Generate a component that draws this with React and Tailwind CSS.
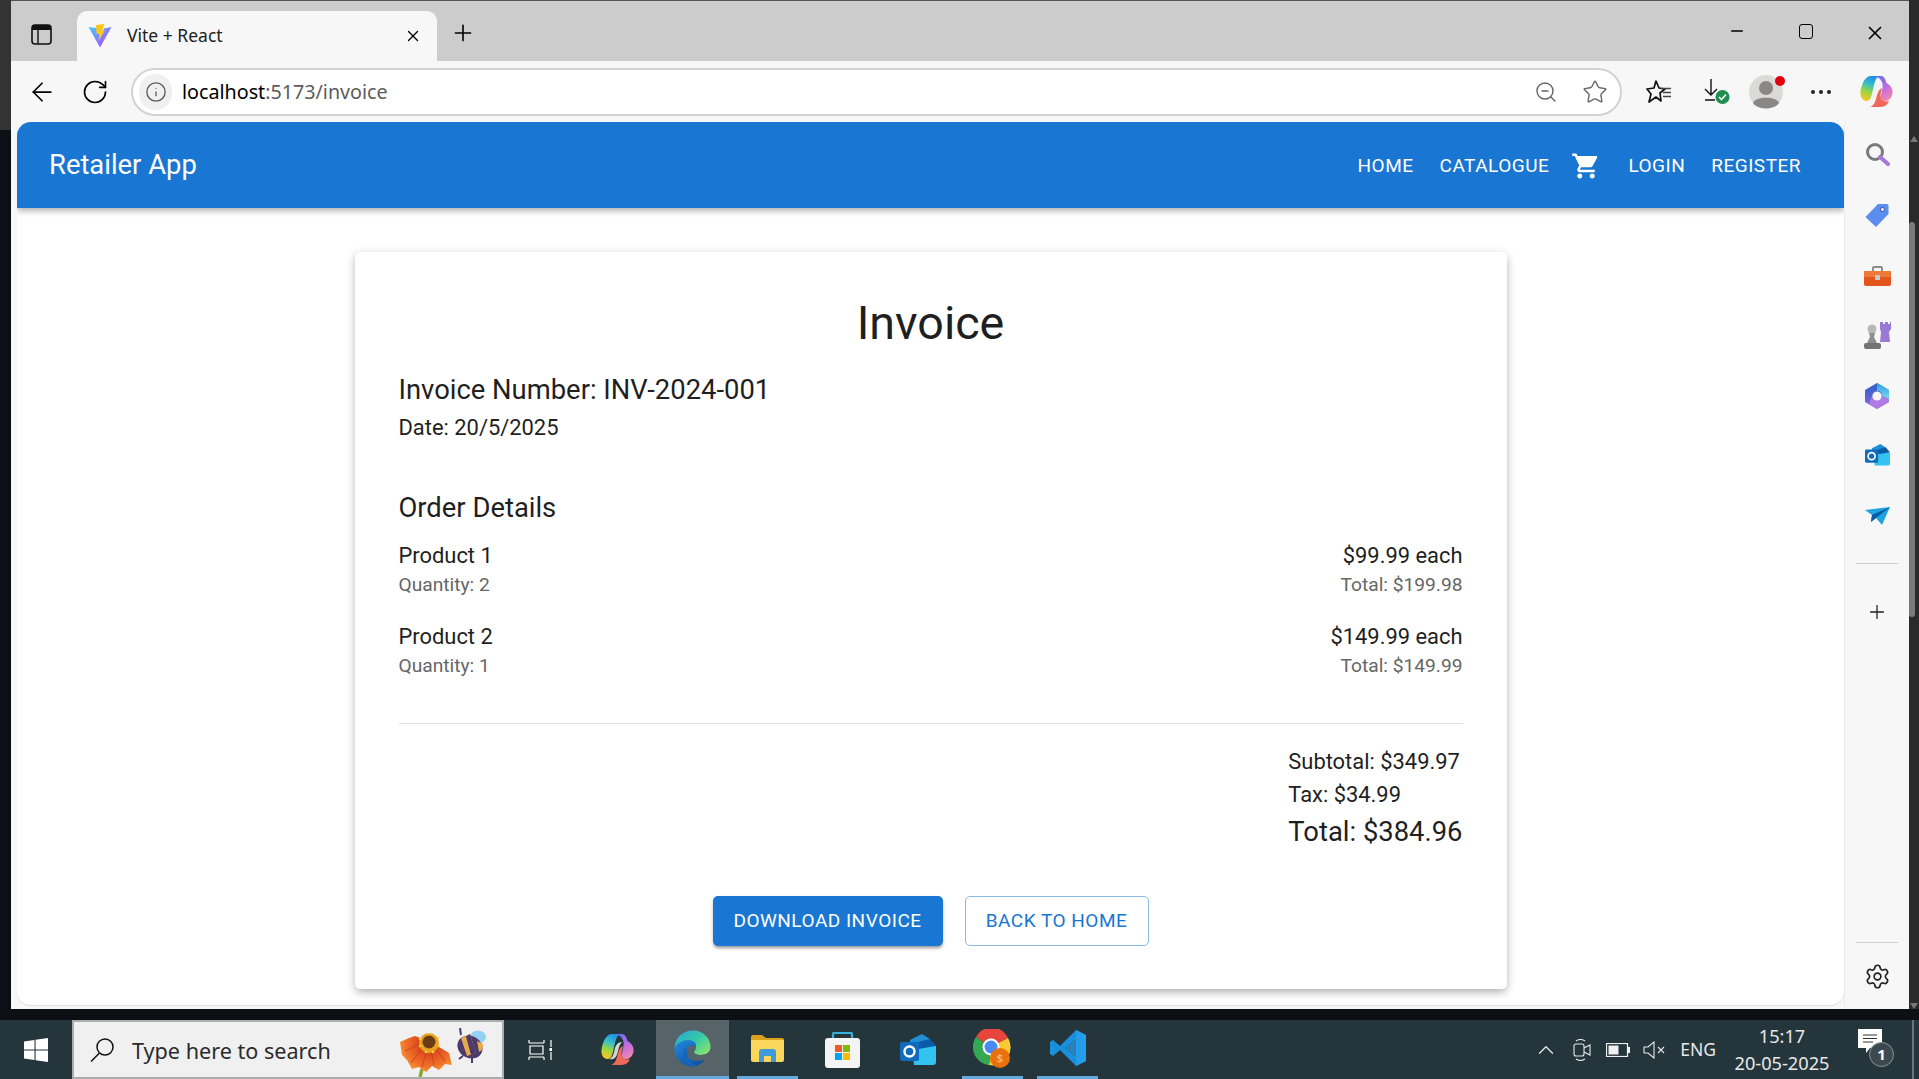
import { ArrowLeft, RotateCw, Info, ZoomOut, Star, X, Plus, Minus, Settings, ChevronUp } from 'lucide-react';

const roboto = "font-['Roboto',sans-serif]";
const segoe = "font-['Noto_Sans',sans-serif]";

function ViteLogo() {
  return (
    <svg viewBox="0 0 24 24" className="h-[24px] w-[24px]">
      <defs>
        <linearGradient id="viteA" x1="0" y1="0" x2="1" y2="1">
          <stop offset="0" stopColor="#41d1ff" />
          <stop offset="1" stopColor="#bd34fe" />
        </linearGradient>
      </defs>
      <path d="M0.5 3 L12 23.5 L23.5 3 L16 4.5 L12 12 L9 4 Z" fill="url(#viteA)" />
      <path d="M8 1 L16.5 0 L14 7 L17 6.5 L10.5 17 L11.5 9.5 L8.5 10 Z" fill="#ffc517" />
    </svg>
  );
}

function CopilotLogo({ id, size = 33 }) {
  return (
    <svg viewBox="0 0 33 33" style={{ width: size, height: size }}>
      <defs>
        <linearGradient id={`${id}A`} x1="0.6" y1="0" x2="0.3" y2="1">
          <stop offset="0" stopColor="#1f8ee8" />
          <stop offset="0.35" stopColor="#35c0c8" />
          <stop offset="0.65" stopColor="#9bd63f" />
          <stop offset="1" stopColor="#fbc52c" />
        </linearGradient>
        <linearGradient id={`${id}B`} x1="0.3" y1="0" x2="0.7" y2="1">
          <stop offset="0" stopColor="#6a6ff0" />
          <stop offset="0.5" stopColor="#c56be2" />
          <stop offset="1" stopColor="#f38aa8" />
        </linearGradient>
      </defs>
      <path d="M11 1 H20 C16 2 15 6 13.5 12 C12 19 11 26 6.5 26 C2.5 26 0 22 0.5 17 C1.5 9 5 1 11 1 Z" fill={`url(#${id}A)`} />
      <path d="M15 1 H21 C24 1 25.5 4 26.5 8 C30 10 33 13 32.5 18 C32 24 27 27 23 26 C20 25 21 19 22.5 13 C23.5 8 21 3 15 1 Z" fill={`url(#${id}B)`} />
      <path d="M10 32 H20 C25 32 28 29 29 26 C26 27 22 27 21 23 C20 20 21 16 22 13 C19 14 18 17 16.5 22 C15.5 26 14 31 10 32 Z" fill="#f0685a" />
      <path d="M8 26 C12 25 13 20 14 15 C15 12 17 9 21 9 C18 12 18 15 16.5 20 C15 25 13 27 8 26 Z" fill="#f4f1ef" opacity="0.85" />
    </svg>
  );
}

function EdgeLogo() {
  return (
    <svg viewBox="0 0 37 37" className="h-[37px] w-[37px]">
      <defs>
        <linearGradient id="edgeA" x1="0" y1="0" x2="1" y2="0.8">
          <stop offset="0" stopColor="#2aa3e0" />
          <stop offset="0.55" stopColor="#35c9a8" />
          <stop offset="1" stopColor="#86e36a" />
        </linearGradient>
        <linearGradient id="edgeB" x1="0" y1="0" x2="0.8" y2="1">
          <stop offset="0" stopColor="#1f8ae0" />
          <stop offset="1" stopColor="#0f4f9e" />
        </linearGradient>
      </defs>
      <path d="M0.5 18 C1 7 9 0.5 19 0.5 C29 0.5 36.5 8 36.5 17 C36.5 22 32 25 27 25 C23 25 20 24 20 22 C20 21 22 20 22 17 C22 13 19 11 15 11 C7 11 0.5 18 0.5 18 Z" fill="url(#edgeA)" />
      <path d="M0.5 18 C3 13 9 10 14 10 C19 10 23 13 22 17 C20 15 15 15 13 19 C11 24 14 29 19 30 C23 31 28 31 31 29 C28 34 23 36.5 18 36.5 C8 36.5 0 28 0.5 18 Z" fill="url(#edgeB)" />
      <path d="M13 19 C15 15 20 15 22 17 C21 20 20 21 20 22 C20 24 23 25 27 25 C30 25 33 24 35 22 C34 25 33 27 31 29 C28 31 23 31 19 30 C14 29 11 24 13 19 Z" fill="#56646a" />
      <path d="M13 20 C13 26 16 34 23 36 C17 37 10 33 9 26 C8.5 23 10 20 13 17 Z" fill="#1567b8" />
    </svg>
  );
}

function ExplorerLogo() {
  return (
    <svg viewBox="0 0 33 27" className="h-[27px] w-[33px]">
      <path d="M0 2 a2 2 0 0 1 2 -2 H11 L15 3 H31 a2 2 0 0 1 2 2 V8 H0 Z" fill="#d9a21b" />
      <path d="M0 5 H33 V25 a2 2 0 0 1 -2 2 H2 a2 2 0 0 1 -2 -2 Z" fill="#fbd75b" />
      <path d="M8 27 V17 a3 3 0 0 1 3 -3 H22 a3 3 0 0 1 3 3 V27 H20 V21 H13 V27 Z" fill="#3f9bd9" />
    </svg>
  );
}

function StoreLogo() {
  return (
    <svg viewBox="0 0 35 36" className="h-[36px] w-[35px]">
      <path d="M8 7 V2 a1 1 0 0 1 1 -1 H26 a1 1 0 0 1 1 1 V7" fill="none" stroke="#35b0d8" strokeWidth="2.2" />
      <rect x="0" y="6" width="35" height="30" rx="3" fill="#f4f4f4" />
      <rect x="10" y="13" width="7" height="7" fill="#f05a28" />
      <rect x="18" y="13" width="7" height="7" fill="#7fba00" />
      <rect x="10" y="21" width="7" height="7" fill="#00a4ef" />
      <rect x="18" y="21" width="7" height="7" fill="#ffb900" />
    </svg>
  );
}

function OutlookLogo({ size = 36 }) {
  return (
    <svg viewBox="0 0 36 32" style={{ width: size, height: size * 0.889 }}>
      <path d="M10 6 L22 0 L30 5 V14 H10 Z" fill="#1f8fd8" />
      <path d="M18 8 L30 5 L36 12 L20 18 Z" fill="#0a5aa8" />
      <path d="M12 16 L36 12 V28 a3 3 0 0 1 -3 3 H14 Z" fill="#33c3f0" />
      <rect x="0" y="8" width="19" height="19" rx="2" fill="#0f6cbd" />
      <circle cx="9.5" cy="17.5" r="5" fill="none" stroke="#fff" strokeWidth="2.4" />
    </svg>
  );
}

function ChromeLogo() {
  return (
    <svg viewBox="0 0 39 39" className="h-[39px] w-[39px]">
      <path d="M18 18 L3 8 A18 18 0 0 1 35 9 Z" fill="#e8453c" />
      <path d="M18 18 L35 9 A18 18 0 0 1 16 36 Z" fill="#fcc934" />
      <path d="M18 18 L16 36 A18 18 0 0 1 3 8 Z" fill="#34a853" />
      <circle cx="18" cy="18" r="8.5" fill="#fff" />
      <circle cx="18" cy="18" r="6.5" fill="#4a8af4" />
      <circle cx="27" cy="29" r="10" fill="#e8710a" />
      <text x="27" y="33" textAnchor="middle" fontSize="11" fill="#f9b27a" fontWeight="700">$</text>
    </svg>
  );
}

function VsCodeLogo() {
  return (
    <svg viewBox="0 0 36 36" className="h-[36px] w-[36px]">
      <path d="M26 0 L36 5 V31 L26 36 L10 20 L3 26 L0 24 V12 L3 10 L10 16 Z M26 10 L15 18 L26 26 Z" fill="#1a8fdc" fillRule="evenodd" />
      <path d="M26 0 L36 5 V31 L26 36 Z M26 10 V26 L15 18 Z" fill="#2aa4ee" fillRule="evenodd" opacity="0.7" />
    </svg>
  );
}

function Flower() {
  return (
    <svg viewBox="0 0 54 44" className="h-[44px] w-[54px]">
      <defs>
        <radialGradient id="petal" gradientUnits="userSpaceOnUse" cx="30" cy="10" r="36">
          <stop offset="0.2" stopColor="#d8401a" />
          <stop offset="0.65" stopColor="#f0702a" />
          <stop offset="1" stopColor="#fbb040" />
        </radialGradient>
      </defs>
      <path d="M23 36 L21 44" stroke="#8aa82a" strokeWidth="3.5" />
      <path d="M1 9 L10 5 L16 3 L24 6 L40 14 L50 20 L53 32 L46 31 L40 37 L33 33 L27 39 L20 34 L13 36 L8 27 L3 22 Z" fill="url(#petal)" />
      <path d="M24 14 L12 30 M28 16 L23 34 M32 17 L35 32 M36 15 L46 28 M21 11 L6 18" stroke="#c8401a" strokeWidth="1.2" opacity="0.7" />
      <circle cx="30" cy="10" r="10" fill="#e8a41c" />
      <circle cx="30" cy="9" r="6.5" fill="#6b3a16" />
      <circle cx="21" cy="6" r="1.3" fill="#fbd24a" />
      <circle cx="21" cy="13" r="1.3" fill="#fbd24a" />
      <circle cx="27" cy="19" r="1.3" fill="#fbd24a" />
      <circle cx="34" cy="19" r="1.3" fill="#fbd24a" />
      <circle cx="40" cy="13" r="1.3" fill="#fbd24a" />
      <circle cx="39" cy="5" r="1.3" fill="#fbd24a" />
      <circle cx="30" cy="0.8" r="0.8" fill="#fbd24a" />
    </svg>
  );
}

function Bee() {
  return (
    <svg viewBox="0 0 33 35" className="h-[35px] w-[33px]">
      <ellipse cx="25" cy="9" rx="8" ry="6.5" fill="#93d0f2" />
      <ellipse cx="17" cy="19" rx="13" ry="11" fill="#4c3a6b" transform="rotate(30 17 19)" />
      <path d="M8 10 L17 6 L23 25 L14 28 Z" fill="#e8a94a" />
      <path d="M13 8.5 L17 6 L23 25 L18 27 Z" fill="#4c3a6b" />
      <path d="M24 13 L30 16 L29 22 L26 24 Z" fill="#e8a94a" />
      <path d="M8 7 L7 0 M10 28 L6 31 M19 30 L19 35" stroke="#4c3a6b" strokeWidth="2" />
    </svg>
  );
}

function SidebarIcons() {
  return (
    <div className="flex w-[65px] shrink-0 flex-col items-center border-l border-[#ececec] bg-[#f7f7f7]">
      <svg viewBox="0 0 25 23" className="mt-[21px] h-[23px] w-[25px]">
        <circle cx="10" cy="9" r="7.5" fill="none" stroke="#7a7a7a" strokeWidth="3" />
        <path d="M15 14 L23 21" stroke="#a678d8" strokeWidth="4" strokeLinecap="round" />
      </svg>
      <svg viewBox="0 0 24 25" className="mt-[37px] h-[25px] w-[24px]">
        <path d="M13 1 H22 a1.5 1.5 0 0 1 1.5 1.5 V11 L11 24 L0.5 14 Z" fill="#5b8def" />
        <circle cx="17.5" cy="6.5" r="2" fill="#fff" stroke="#2c4ea8" strokeWidth="1" />
      </svg>
      <svg viewBox="0 0 27 20" className="mt-[38px] h-[20px] w-[27px]">
        <path d="M9 5 V2 a1 1 0 0 1 1 -1 H17 a1 1 0 0 1 1 1 V5" fill="none" stroke="#8c8c8c" strokeWidth="2" />
        <rect x="0" y="5" width="27" height="15" rx="2" fill="#e2551c" />
        <rect x="0" y="5" width="27" height="6" fill="#ee7a3a" />
        <rect x="11" y="9" width="5" height="5" fill="#c9c9c9" />
      </svg>
      <svg viewBox="0 0 27 27" className="mt-[36px] h-[27px] w-[27px]">
        <path d="M16 0 h3 v2 h2 v-2 h3 v2 h2 v-2 h1 V7 L25 10 L26 20 H16 L17 10 L16 7 Z" fill="#9a78d8" />
        <circle cx="8" cy="7" r="4.5" fill="#b8b8b8" />
        <path d="M5 11 H11 L10 15 L13 21 H3 L6 15 Z" fill="#8e8e8e" />
        <rect x="0" y="21" width="17" height="6" rx="2" fill="#747474" />
      </svg>
      <svg viewBox="0 0 24 26" className="mt-[34px] h-[26px] w-[24px]">
        <defs>
          <linearGradient id="m365a" x1="0" y1="0" x2="0" y2="1">
            <stop offset="0" stopColor="#2b5fc8" />
            <stop offset="1" stopColor="#8a6ae0" />
          </linearGradient>
          <linearGradient id="m365b" x1="0" y1="0" x2="0" y2="1">
            <stop offset="0" stopColor="#2aa0e0" />
            <stop offset="1" stopColor="#7fd8f0" />
          </linearGradient>
        </defs>
        <path d="M12 0 L24 7 V19 L12 26 L0 19 V7 Z" fill="url(#m365a)" />
        <path d="M12 0 L24 7 V16 L17 13 C17 9 14 7 12 8 Z" fill="url(#m365b)" />
        <path d="M7 13 C9 17 15 17 17 13 L24 16 V19 L12 26 L4 21 Z" fill="#b07ae8" />
        <circle cx="12" cy="13" r="4.6" fill="#f7f7f7" />
      </svg>
      <div className="mt-[34px] flex h-[25px] items-center">
        <OutlookLogo size={25} />
      </div>
      <svg viewBox="0 0 25 18" className="mt-[39px] h-[18px] w-[25px]">
        <path d="M0 3 L25 0 L17 18 L11 11 L6 15 L7 8 Z" fill="#1fa2e0" />
        <path d="M25 0 L7 8 L6 15 L11 11 Z" fill="#0a5aa8" />
      </svg>
      <div className="mt-[38px] h-px w-[42px] bg-[#cfcfcf]" />
      <Plus className="mt-[37px] h-[22px] w-[22px] text-[#222]" strokeWidth={1.4} />
      <div className="mt-auto h-px w-[42px] bg-[#cfcfcf]" />
      <Settings className="mb-[19px] mt-[20px] h-[27px] w-[27px] text-[#222]" strokeWidth={1.5} />
    </div>
  );
}

function Invoice() {
  return (
    <div className={`mt-[44px] w-[1152px] rounded-[5px] bg-white px-[44px] pb-[43px] pt-[43px] text-[#1f1f1f] shadow-[0_4px_8px_-1px_rgba(0,0,0,0.25),0_2px_12px_rgba(0,0,0,0.1)] ${roboto}`}>
      <h1 className="text-center text-[46.6px] leading-[56px]">Invoice</h1>
      <div className="mt-[18px] text-[27.4px] leading-[43px]">Invoice Number: INV-2024-001</div>
      <div className="text-[21.9px] leading-[32px]">Date: 20/5/2025</div>
      <div className="mt-[43px] text-[27.4px] leading-[43px]">Order Details</div>
      <div className="mt-[10px] flex justify-between">
        <div>
          <div className="text-[21.9px] leading-[32px]">Product 1</div>
          <div className="text-[19.2px] leading-[26px] text-[#666]">Quantity: 2</div>
        </div>
        <div className="text-right">
          <div className="text-[21.9px] leading-[32px]">$99.99 each</div>
          <div className="text-[19.2px] leading-[26px] text-[#666]">Total: $199.98</div>
        </div>
      </div>
      <div className="mt-[23px] flex justify-between">
        <div>
          <div className="text-[21.9px] leading-[32px]">Product 2</div>
          <div className="text-[19.2px] leading-[26px] text-[#666]">Quantity: 1</div>
        </div>
        <div className="text-right">
          <div className="text-[21.9px] leading-[32px]">$149.99 each</div>
          <div className="text-[19.2px] leading-[26px] text-[#666]">Total: $149.99</div>
        </div>
      </div>
      <div className="mt-[44px] h-px bg-[#e0e0e0]" />
      <div className="mt-[21px] flex justify-end">
        <div>
          <div className="text-[21.9px] leading-[33px]">Subtotal: $349.97</div>
          <div className="text-[21.9px] leading-[33px]">Tax: $34.99</div>
          <div className="text-[27.4px] leading-[43px]">Total: $384.96</div>
        </div>
      </div>
      <div className="mt-[42px] flex justify-center gap-[22px]">
        <button className="flex h-[50px] w-[230px] items-center justify-center rounded-[5px] bg-[#1976d2] text-[19px] font-normal tracking-[0.5px] text-white shadow-[0_3px_3px_-1px_rgba(0,0,0,0.3),0_2px_4px_rgba(0,0,0,0.15)]">DOWNLOAD INVOICE</button>
        <button className="flex h-[50px] w-[184px] items-center justify-center rounded-[5px] border border-[#8cb9e6] bg-white text-[19px] font-normal tracking-[0.5px] text-[#1976d2]">BACK TO HOME</button>
      </div>
    </div>
  );
}

function BrowserChrome() {
  return (
    <>
      <div className="flex h-[60px] shrink-0 bg-[#cccccc] text-black">
        <svg viewBox="0 0 21 21" className="ml-[20px] mt-[23px] h-[21px] w-[21px]">
          <rect x="1" y="1" width="19" height="19" rx="3" fill="none" stroke="#111" strokeWidth="1.6" />
          <path d="M1 4 a3 3 0 0 1 3 -3 H17 a3 3 0 0 1 3 3 V6 H1 Z" fill="#111" />
          <path d="M7 6 V20" stroke="#111" strokeWidth="1.4" />
        </svg>
        <div className="ml-[25px] mt-[10px] flex h-[50px] w-[360px] items-center rounded-t-[10px] bg-[#f7f7f7] pl-[11px]">
          <ViteLogo />
          <span className={`ml-[15px] pb-[2px] text-[17.5px] text-[#222] ${segoe}`}>Vite + React</span>
          <X className="ml-auto mr-[15px] h-[18px] w-[18px]" strokeWidth={1.8} />
        </div>
        <Plus className="ml-[13px] mt-[19px] h-[26px] w-[26px]" strokeWidth={1.5} />
        <div className="ml-auto flex">
          <Minus className="mt-[21px] h-[18px] w-[18px]" strokeWidth={2} />
          <div className="ml-[53px] mt-[23px] h-[15px] w-[14px] rounded-[3px] border-[1.6px] border-black" />
          <X className="ml-[51px] mr-[23px] mt-[21px] h-[22px] w-[22px]" strokeWidth={1.8} />
        </div>
      </div>

      <div className="flex h-[61px] shrink-0 items-center bg-[#f7f7f7] text-black">
        <ArrowLeft className="ml-[16px] h-[30px] w-[30px]" strokeWidth={1.4} />
        <RotateCw className="ml-[24px] h-[28px] w-[28px]" strokeWidth={1.4} />
        <div className="ml-[22px] flex h-[48px] w-[1491px] items-center rounded-full border-2 border-[#d2d2d2] bg-white pl-[6px]">
          <div className="flex h-[36px] w-[33px] items-center justify-center rounded-full bg-[#f0f0f0]">
            <Info className="h-[22px] w-[22px] text-[#555]" strokeWidth={1.4} />
          </div>
          <span className={`ml-[10px] text-[19.7px] ${segoe}`}>localhost<span className="text-[#5c5c5c]">:5173/invoice</span></span>
          <ZoomOut className="ml-auto h-[24px] w-[24px] text-[#666]" strokeWidth={1.4} />
          <Star className="ml-[24px] mr-[12px] h-[26px] w-[26px] text-[#666]" strokeWidth={1.3} />
        </div>
        <svg viewBox="0 0 25 24" className="ml-[24px] h-[24px] w-[25px]">
          <path d="M10 1 L13 8 L19 9 L14 13 L15 21 L10 17 L3 22 L5 14 L1 9 L8 8 Z" fill="none" stroke="#111" strokeWidth="1.7" strokeLinejoin="round" />
          <path d="M15 8.5 H25 M17 12.5 H25 M17 16.5 H25" stroke="#444" strokeWidth="1.3" />
        </svg>
        <svg viewBox="0 0 26 25" className="ml-[33px] h-[25px] w-[26px]">
          <path d="M7 0 V15 M1 10 L7 16 L13 10 M1 21 H11" fill="none" stroke="#111" strokeWidth="1.4" />
          <circle cx="18.5" cy="18" r="7" fill="#1e8e4e" />
          <path d="M15 18 L17.5 20.5 L22 15.5" fill="none" stroke="#fff" strokeWidth="1.6" />
        </svg>
        <svg viewBox="0 0 38 34" className="ml-[19px] h-[34px] w-[38px]">
          <circle cx="17" cy="17" r="17" fill="#dcdad7" />
          <circle cx="17" cy="13" r="7" fill="#8a8886" />
          <path d="M4 28 C6 21 28 21 30 28 C26 35 8 35 4 28 Z" fill="#8a8886" />
          <circle cx="31" cy="6" r="5" fill="#e3000b" />
        </svg>
        <div className="ml-[24px] flex gap-[4px]">
          <span className="h-[4px] w-[4px] rounded-full bg-[#222]" />
          <span className="h-[4px] w-[4px] rounded-full bg-[#222]" />
          <span className="h-[4px] w-[4px] rounded-full bg-[#222]" />
        </div>
        <div className="ml-[29px]">
          <CopilotLogo id="copTop" />
        </div>
      </div>
    </>
  );
}

function PageArea() {
  return (
    <div className="flex min-h-0 flex-1 bg-[#f7f7f7]">
      <div className="ml-[6px] flex h-[883px] w-[1827px] flex-col items-center overflow-hidden rounded-[14px] bg-white shadow-[0_1px_1px_rgba(0,0,0,0.1)]">
        <header className={`flex h-[86px] w-full shrink-0 items-center bg-[#1976d2] pl-[32px] pr-[43px] pt-[2px] text-white shadow-[0_3px_6px_rgba(0,0,0,0.3)] ${roboto}`}>
          <div className="text-[27.4px] leading-none">Retailer App</div>
          <nav className="ml-auto flex items-center text-[19px] font-normal tracking-[0.5px]">
            <span>HOME</span>
            <span className="ml-[26px]">CATALOGUE</span>
            <svg viewBox="0 0 24 24" className="ml-[22px] h-[30px] w-[30px]" fill="currentColor">
              <path d="M7 18c-1.1 0-1.99.9-1.99 2S5.9 22 7 22s2-.9 2-2-.9-2-2-2zM1 2v2h2l3.6 7.59-1.35 2.45c-.16.28-.25.61-.25.96 0 1.1.9 2 2 2h12v-2H7.42c-.14 0-.25-.11-.25-.25l.03-.12.9-1.63h7.45c.75 0 1.41-.41 1.75-1.03l3.58-6.49c.08-.14.12-.31.12-.48 0-.55-.45-1-1-1H5.21l-.94-2H1zm16 16c-1.1 0-1.99.9-1.99 2s.89 2 1.99 2 2-.9 2-2-.9-2-2-2z" />
            </svg>
            <span className="ml-[27px]">LOGIN</span>
            <span className="ml-[26px]">REGISTER</span>
          </nav>
        </header>
        <Invoice />
      </div>
      <SidebarIcons />
    </div>
  );
}

function Taskbar() {
  return (
    <div className="flex h-[59px] shrink-0 items-center bg-[#25353c] text-white">
      <svg viewBox="0 0 24 24" className="ml-[24px] h-[24px] w-[24px]" fill="#fff">
        <path d="M0 3.4 L10.5 2 V11.4 H0 Z M11.6 1.8 L24 0 V11.4 H11.6 Z M0 12.6 H10.5 V22 L0 20.6 Z M11.6 12.6 H24 V24 L11.6 22.2 Z" />
      </svg>
      <div className={`ml-[24px] flex h-full w-[432px] items-center border-2 border-[#a9adaf] bg-[#f0f0f0] ${segoe}`}>
        <svg viewBox="0 0 24 24" className="ml-[16px] h-[24px] w-[24px]" fill="none" stroke="#111" strokeWidth="1.5">
          <circle cx="15" cy="9" r="8" />
          <path d="M9.5 15 L1 23.5" />
        </svg>
        <span className="ml-[18px] pt-[4px] text-[21.6px] text-[#2b2b2b]">Type here to search</span>
        <div className="ml-auto flex h-full items-end">
          <Flower />
          <div className="mb-[14px]">
            <Bee />
          </div>
          <div className="w-[16px]" />
        </div>
      </div>
      <svg viewBox="0 0 24 22" className="ml-[24px] h-[22px] w-[24px]" fill="none" stroke="#fff" strokeWidth="1.2">
        <path d="M1 4 V1 M16 4 V1 M1 4 H16 M2 7 H15 V15 H2 Z M1 21 V18 M16 21 V18 M1 18 H16 M23 1 V8 M23 13 V21" />
        <rect x="21.5" y="9" width="3" height="3" fill="#fff" stroke="none" />
      </svg>
      <div className="ml-[28px] flex h-full items-center">
        <div className="flex h-full w-[75px] items-center justify-center">
          <CopilotLogo id="copBar" />
        </div>
        <div className="flex h-full w-[75px] items-center justify-center">
          <div className="flex h-full w-[73px] items-center justify-center border-b-[3px] border-[#64aadd] bg-[#56646a]">
            <EdgeLogo />
          </div>
        </div>
        <div className="flex h-full w-[75px] items-center justify-center">
          <div className="flex h-full w-[61px] items-center justify-center border-b-[3px] border-[#64aadd]">
            <ExplorerLogo />
          </div>
        </div>
        <div className="flex h-full w-[75px] items-center justify-center">
          <StoreLogo />
        </div>
        <div className="flex h-full w-[75px] items-center justify-center">
          <OutlookLogo />
        </div>
        <div className="flex h-full w-[75px] items-center justify-center">
          <div className="flex h-full w-[61px] items-center justify-center border-b-[3px] border-[#64aadd]">
            <ChromeLogo />
          </div>
        </div>
        <div className="flex h-full w-[75px] items-center justify-center">
          <div className="flex h-full w-[61px] items-center justify-center border-b-[3px] border-[#64aadd]">
            <VsCodeLogo />
          </div>
        </div>
      </div>
      <div className={`ml-auto flex h-full items-center ${segoe}`}>
        <ChevronUp className="h-[26px] w-[26px] text-[#e8e8e8]" strokeWidth={1.2} />
        <svg viewBox="0 0 18 22" className="ml-[14px] h-[22px] w-[18px]" fill="none" stroke="#e8e8e8" strokeWidth="1.1">
          <rect x="1" y="5" width="10" height="12" rx="2" />
          <path d="M11 9 L17 6 V16 L11 13 M3 2 C6 0 9 0 12 2 M3 20 C6 22 9 22 12 20" />
        </svg>
        <svg viewBox="0 0 24 14" className="ml-[15px] h-[14px] w-[24px]">
          <rect x="0.5" y="0.5" width="21" height="13" fill="none" stroke="#f0f0f0" strokeWidth="1.2" />
          <rect x="2.5" y="2.5" width="10" height="9" fill="#f0f0f0" />
          <rect x="22" y="4" width="2" height="6" fill="#f0f0f0" />
        </svg>
        <svg viewBox="0 0 22 18" className="ml-[13px] h-[18px] w-[22px]" fill="none" stroke="#e8e8e8" strokeWidth="1.1">
          <path d="M1 6 H5 L11 1 V17 L5 12 H1 Z M15 6 L21 12 M21 6 L15 12" />
        </svg>
        <span className="ml-[15px] text-[17.5px] text-[#e8e8e8]">ENG</span>
        <div className="ml-[17px] flex w-[98px] flex-col items-center text-[18.2px] leading-[27px] text-[#e8e8e8]">
          <span>15:17</span>
          <span>20-05-2025</span>
        </div>
        <div className="relative ml-[27px] h-[38px] w-[38px]">
          <svg viewBox="0 0 24 24" className="mt-[-2px] h-[24px] w-[24px]">
            <path d="M0 0 H24 V19 H12 L8 24 V19 H0 Z" fill="#fff" />
            <path d="M5 6 H19 M5 9.5 H19 M5 13 H15" stroke="#333" strokeWidth="1.1" />
          </svg>
          <span className="absolute left-[11px] top-[11px] flex h-[25px] w-[25px] items-center justify-center rounded-full border border-[#8a9397] bg-[#3c4a50] text-[15px] font-bold text-white">1</span>
        </div>
        <div className="ml-[16px] mr-[5px] h-full w-[2px] bg-[#6a767b]" />
      </div>
    </div>
  );
}

export default function App() {
  return (
    <div className="flex h-[1079px] w-[1919px] flex-col overflow-hidden bg-[#0c1015]">
      <div className="flex h-[1009px] shrink-0">
        <div className="flex w-[11px] shrink-0 flex-col">
          <div className="h-[130px] bg-[#333333]" />
        </div>
        <div className="flex w-[1898px] flex-col border-t border-[#555]">
          <BrowserChrome />
          <PageArea />
        </div>
        <div className="flex w-[10px] shrink-0 flex-col items-start bg-[#2a2a2a]">
          <div className="ml-[1px] mt-[136px] h-0 w-0 border-x-[4px] border-b-[6px] border-x-transparent border-b-[#777]" />
          <div className="ml-0 mt-[80px] h-[395px] w-[6px] rounded-[3px] bg-[#7a7a7a]" />
          <div className="ml-[1px] mt-auto h-0 w-0 border-x-[4px] border-t-[6px] border-x-transparent border-t-[#777]" />
        </div>
      </div>
      <div className="h-[11px] shrink-0" />
      <Taskbar />
    </div>
  );
}
